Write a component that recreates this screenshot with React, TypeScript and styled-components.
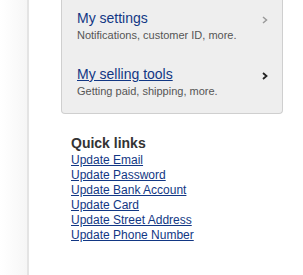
import styled, { createGlobalStyle } from "styled-components";

const GlobalStyle = createGlobalStyle`
  html, body {
    margin: 0;
    padding: 0;
    background: #fff;
    font-family: "Liberation Sans", Arial, sans-serif;
  }
`;

const tools = [
  {
    title: "My settings",
    sub: "Notifications, customer ID, more.",
    active: false,
  },
  {
    title: "My selling tools",
    sub: "Getting paid, shipping, more.",
    active: true,
  },
];

const links = [
  "Update Email",
  "Update Password",
  "Update Bank Account",
  "Update Card",
  "Update Street Address",
  "Update Phone Number",
];

function Chevron({ dark }: { dark: boolean }) {
  return (
    <svg width="6" height="8" viewBox="0 0 6 8">
      <path
        d="M1 1 L4.5 4 L1 7"
        fill="none"
        stroke={dark ? "#222" : "#9a9a9a"}
        strokeWidth={dark ? 1.8 : 1.5}
      />
    </svg>
  );
}

export default function App() {
  return (
    <Page>
      <GlobalStyle />
      <Sidebar />
      <Main>
        <Panel>
          {tools.map((t) => (
            <ToolRow key={t.title}>
              <ToolText>
                <ToolTitle href="#" $underline={t.active}>
                  {t.title}
                </ToolTitle>
                <ToolSub>{t.sub}</ToolSub>
              </ToolText>
              <ChevronBox>
                <Chevron dark={t.active} />
              </ChevronBox>
            </ToolRow>
          ))}
        </Panel>

        <QuickLinks>
          <h3>Quick links</h3>
          {links.map((l) => (
            <QuickLink key={l} href="#">
              {l}
            </QuickLink>
          ))}
        </QuickLinks>
      </Main>
    </Page>
  );
}

const Page = styled.div`
  display: flex;
  flex-direction: row;
  min-height: 100vh;
`;

const Sidebar = styled.div`
  width: 27px;
  flex-shrink: 0;
  background: linear-gradient(to right, #ffffff, #f6f6f6);
  border-right: 2px solid #e4e4e4;
`;

const Main = styled.div`
  display: flex;
  flex-direction: column;
  flex: 1;
`;

const Panel = styled.div`
  margin-left: 32px;
  width: 220px;
  background: #eeeeee;
  border: 1px solid #cfcfcf;
  border-top: none;
  border-radius: 0 0 4px 4px;
  padding-bottom: 1px;
`;

const ToolRow = styled.div`
  display: flex;
  flex-direction: row;
  align-items: flex-start;
  justify-content: space-between;
  height: 56px;
  box-sizing: border-box;
  padding: 10px 14px 0 15px;
`;

const ToolText = styled.div`
  display: flex;
  flex-direction: column;
  gap: 1px;
`;

const ToolTitle = styled.a<{ $underline: boolean }>`
  font-size: 14px;
  line-height: 17px;
  color: #123784;
  text-decoration: ${(p) => (p.$underline ? "underline" : "none")};
`;

const ToolSub = styled.span`
  font-size: 11px;
  line-height: 14px;
  color: #555;
`;

const ChevronBox = styled.div`
  display: flex;
  align-items: center;
  height: 17px;
  padding-top: 1px;
`;

const QuickLinks = styled.div`
  display: flex;
  flex-direction: column;
  align-items: flex-start;
  margin: 20px 0 0 42px;

  > h3 {
    margin: 0 0 1px;
    font-size: 14px;
    line-height: 18px;
    font-weight: 700;
    color: #333;
  }
`;

const QuickLink = styled.a`
  font-size: 12px;
  line-height: 15px;
  color: #123784;
  text-decoration: underline;
`;
